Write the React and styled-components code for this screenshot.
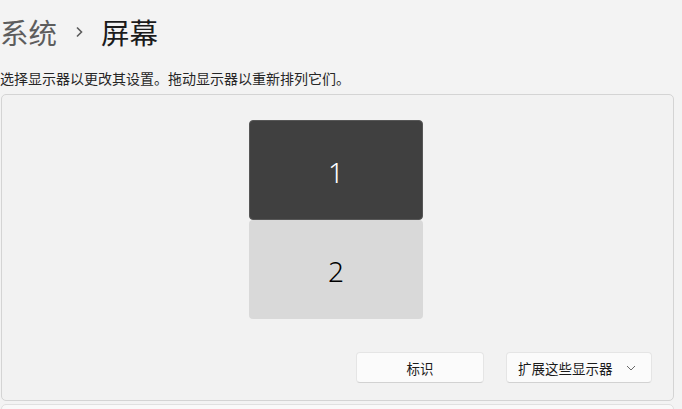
import React from 'react';
import styled, { createGlobalStyle } from 'styled-components';

const GlobalStyle = createGlobalStyle`
  html, body {
    margin: 0;
    padding: 0;
    background: #f3f3f3;
    font-family: "Noto Sans CJK SC", "Noto Sans", sans-serif;
    overflow: hidden;
  }
`;

const Page = styled.div`
  width: 682px;
  height: 409px;
  overflow: hidden;
`;

const Breadcrumb = styled.div`
  display: flex;
  align-items: center;
  height: 40px;
  margin-top: 12px;
  font-size: 28.5px;
  line-height: 40px;
`;

const Crumb = styled.span`
  color: ${p => (p.$current ? '#1b1b1b' : '#5d5d5d')};
  font-weight: 400;
`;

const Chevron = styled.span`
  color: #5c5c5c;
  margin: 0 18px 0 18px;
  display: flex;
  align-items: center;
`;

const Subtitle = styled.div`
  font-size: 14px;
  line-height: 20px;
  color: #262626;
  margin-top: 16px;
`;

const Panel = styled.div`
  margin: 6px 0 0 1px;
  width: 673px;
  height: 307px;
  box-sizing: border-box;
  border: 1px solid #d4d4d4;
  border-radius: 5px;
  background: #f2f2f2;
  display: flex;
  flex-direction: column;
  align-items: center;
  padding-top: 25px;
`;

const Monitors = styled.div`
  display: flex;
  flex-direction: column;
  margin-left: -3px;
`;

const Monitor = styled.div`
  width: 174px;
  height: ${p => (p.$active ? '100px' : '99px')};
  box-sizing: border-box;
  display: flex;
  align-items: center;
  justify-content: center;
  border-radius: 4px;
  background: ${p => (p.$active ? '#404040' : '#d9d9d9')};
  border: ${p => (p.$active ? '1px solid #575757' : 'none')};
  color: ${p => (p.$active ? '#ffffff' : '#000000')};
  font-family: "Noto Sans", "Open Sans", sans-serif;
  font-size: 28px;
  font-weight: 300;
  padding-top: ${p => (p.$active ? '4px' : '2px')};
`;

const Actions = styled.div`
  align-self: flex-end;
  display: flex;
  gap: 22px;
  margin-top: 33px;
  margin-right: 21px;
`;

const Button = styled.button`
  width: ${p => p.$w}px;
  height: 31px;
  box-sizing: border-box;
  background: #fbfbfb;
  border: 1px solid #e5e5e5;
  border-bottom-color: #d2d2d2;
  border-radius: 4px;
  font-family: "Noto Sans CJK SC", sans-serif;
  font-size: 13.5px;
  color: #1b1b1b;
  display: flex;
  align-items: center;
  justify-content: ${p => (p.$select ? 'space-between' : 'center')};
  padding: 0 ${p => (p.$select ? '15px 0 11px' : '0')};
  cursor: pointer;
`;

const NextPanel = styled.div`
  margin: 3px 0 0 1px;
  width: 673px;
  height: 40px;
  box-sizing: border-box;
  border: 1px solid #e0e0e0;
  border-radius: 5px;
  background: #f9f9f9;
`;

function ChevronRight() {
  return (
    <svg width="8" height="12" viewBox="0 0 8 12">
      <path d="M2 1.5 L6.5 6 L2 10.5" fill="none" stroke="#5c5c5c" strokeWidth="1.6" />
    </svg>
  );
}

function ChevronDown() {
  return (
    <svg width="10" height="6" viewBox="0 0 10 6">
      <path d="M1 1 L5 5 L9 1" fill="none" stroke="#6a6a6a" strokeWidth="1" />
    </svg>
  );
}

export default function App() {
  return (
    <Page>
      <GlobalStyle />
      <Breadcrumb>
        <Crumb>系统</Crumb>
        <Chevron><ChevronRight /></Chevron>
        <Crumb $current>屏幕</Crumb>
      </Breadcrumb>
      <Subtitle>选择显示器以更改其设置。拖动显示器以重新排列它们。</Subtitle>
      <Panel>
        <Monitors>
          <Monitor $active>1</Monitor>
          <Monitor>2</Monitor>
        </Monitors>
        <Actions>
          <Button $w={128}>标识</Button>
          <Button $w={146} $select>
            扩展这些显示器
            <ChevronDown />
          </Button>
        </Actions>
      </Panel>
      <NextPanel />
    </Page>
  );
}
